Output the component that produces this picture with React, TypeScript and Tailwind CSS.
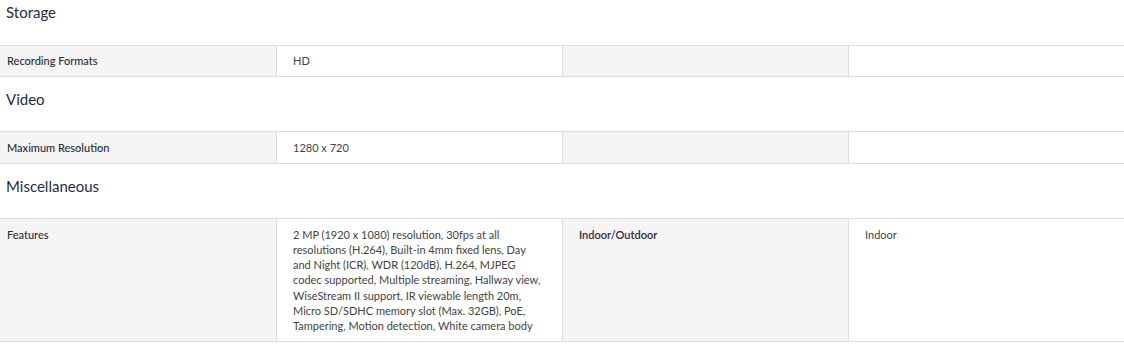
type Row = { label: string; value: string; label2?: string; value2?: string }

const sections: { title: string; rows: Row[] }[] = [
  { title: "Storage", rows: [{ label: "Recording Formats", value: "HD" }] },
  { title: "Video", rows: [{ label: "Maximum Resolution", value: "1280 x 720" }] },
  {
    title: "Miscellaneous",
    rows: [
      {
        label: "Features",
        value:
          "2 MP (1920 x 1080) resolution, 30fps at all resolutions (H.264), Built-in 4mm fixed lens, Day and Night (ICR), WDR (120dB), H.264, MJPEG codec supported, Multiple streaming, Hallway view, WiseStream II support, IR viewable length 20m, Micro SD/SDHC memory slot (Max. 32GB), PoE, Tampering, Motion detection, White camera body",
        label2: "Indoor/Outdoor",
        value2: "Indoor",
      },
    ],
  },
]

export default function App() {
  return (
    <div className="bg-white w-[1124px] h-[345px] overflow-hidden font-['Lato',sans-serif]">
      <div className="-mt-[10px]">
        {sections.map((s) => (
          <section key={s.title}>
            <h3 className="px-[6px] pt-[13px] pb-[23.5px] text-[15px] leading-[18px] text-[#1f2b4d]">
              {s.title}
            </h3>
            {s.rows.map((r) => (
              <div
                key={r.label}
                className="grid grid-cols-[277px_286px_286px_1fr] border-y border-[#dddddd] text-[11px] leading-[15.3px]"
              >
                <div className="bg-[#f5f5f5] pl-[7px] pr-2 py-[7.5px] border-r border-[#dddddd] text-[#2e2b3d] font-medium">
                  {r.label}
                </div>
                <div className="px-4 py-[7.5px] border-r border-[#dddddd] text-[#444444]">{r.value}</div>
                <div className="bg-[#f5f5f5] px-4 py-[7.5px] border-r border-[#dddddd] text-[#2e2b3d] font-semibold">
                  {r.label2}
                </div>
                <div className="px-4 py-[7.5px] text-[#444444]">{r.value2}</div>
              </div>
            ))}
          </section>
        ))}
      </div>
    </div>
  )
}
